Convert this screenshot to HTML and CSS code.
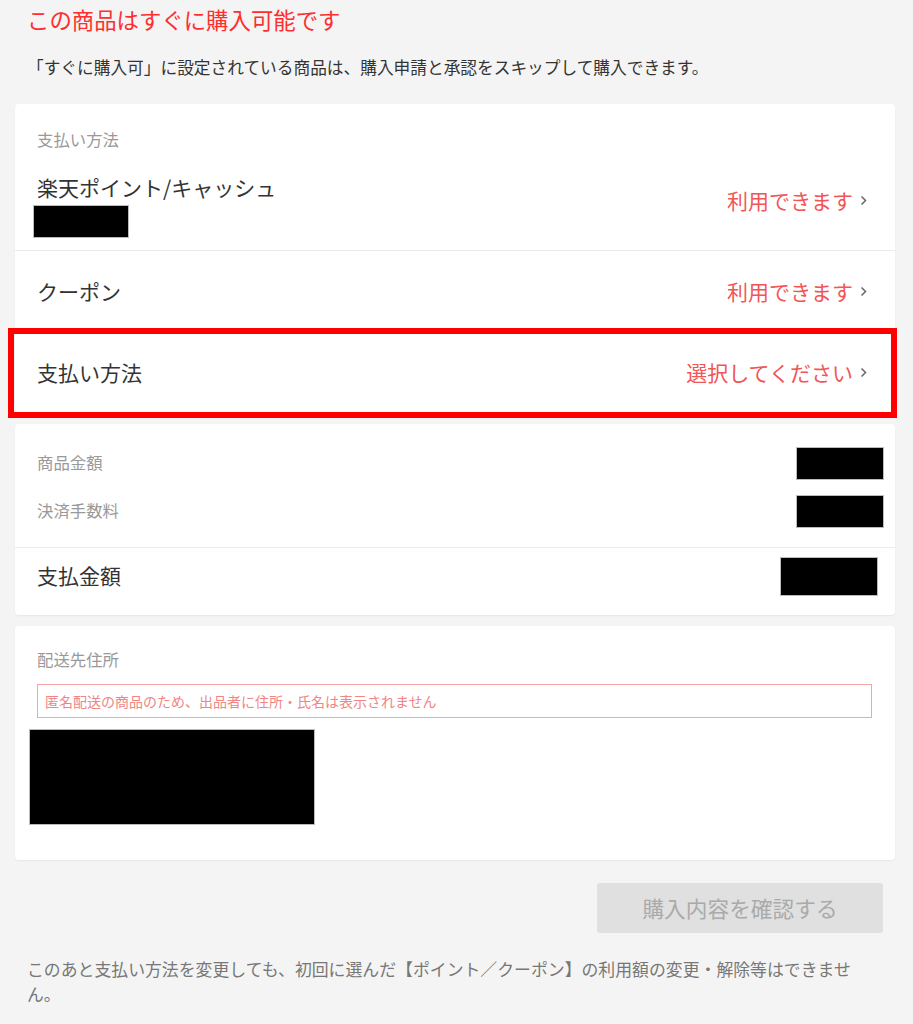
FILE: index.html
```html
<!DOCTYPE html>
<html lang="ja">
<head>
<meta charset="utf-8">
<title>購入手続き</title>
<link rel="stylesheet" href="styles.css">
</head>
<body>
<div class="page">
  <h1 class="title">この商品はすぐに購入可能です</h1>
  <p class="lead">「すぐに購入可」に設定されている商品は、購入申請と承認をスキップして購入できます。</p>

  <section class="card">
    <div class="card-label">支払い方法</div>
    <div class="row row-first">
      <div class="row-main">
        <div class="row-title">楽天ポイント/キャッシュ</div>
        <div class="redact redact-points"></div>
      </div>
      <div class="row-action">利用できます<svg class="chev" width="7" height="11" viewBox="0 0 7 11"><path d="M1.5 1.5 L5.5 5.5 L1.5 9.5" fill="none" stroke="#666" stroke-width="1.5"/></svg></div>
    </div>
    <div class="row row-simple">
      <div class="row-title">クーポン</div>
      <div class="row-action">利用できます<svg class="chev" width="7" height="11" viewBox="0 0 7 11"><path d="M1.5 1.5 L5.5 5.5 L1.5 9.5" fill="none" stroke="#666" stroke-width="1.5"/></svg></div>
    </div>
    <div class="row row-simple row-highlight">
      <div class="row-title">支払い方法</div>
      <div class="row-action">選択してください<svg class="chev" width="7" height="11" viewBox="0 0 7 11"><path d="M1.5 1.5 L5.5 5.5 L1.5 9.5" fill="none" stroke="#666" stroke-width="1.5"/></svg></div>
      <div class="annotation"></div>
    </div>
  </section>

  <section class="card card-amount">
    <div class="amount-list">
      <div class="amount-row">
        <span class="amount-label">商品金額</span>
        <span class="redact redact-amount"></span>
      </div>
      <div class="amount-row">
        <span class="amount-label">決済手数料</span>
        <span class="redact redact-amount"></span>
      </div>
    </div>
    <div class="total-row">
      <span class="total-label">支払金額</span>
      <span class="redact redact-total"></span>
    </div>
  </section>

  <section class="card card-address">
    <div class="card-label">配送先住所</div>
    <div class="notice">匿名配送の商品のため、出品者に住所・氏名は表示されません</div>
    <div class="redact redact-address"></div>
  </section>

  <div class="actions">
    <button class="confirm" type="button" disabled>購入内容を確認する</button>
  </div>

  <p class="footnote">このあと支払い方法を変更しても、初回に選んだ【ポイント／クーポン】の利用額の変更・解除等はできません。</p>
</div>
</body>
</html>
```

FILE: styles.css
```css
* { box-sizing: border-box; }

html, body {
  margin: 0;
  padding: 0;
  background: #f4f4f4;
}

body {
  font-family: "Noto Sans CJK JP", "Noto Sans", sans-serif;
  color: #333;
}

.page {
  margin: 0 18px 0 15px;
  padding-top: 4px;
}

.title {
  margin: 0;
  padding-left: 12px;
  font-size: 22.4px;
  line-height: 30px;
  font-weight: normal;
  color: #ff2e2e;
}

.lead {
  margin: 21px 0 0;
  padding-left: 12px;
  font-size: 16.7px;
  line-height: 24px;
  color: #333;
}

.card {
  background: #fff;
  border-radius: 4px;
  box-shadow: 0 1px 2px rgba(0, 0, 0, 0.06);
}

.page > .card:first-of-type { margin-top: 25px; }

.card-label {
  padding: 24px 22px 0;
  font-size: 16.4px;
  line-height: 22px;
  color: #999;
}

.row {
  display: flex;
  align-items: center;
  justify-content: space-between;
  padding: 0 28px 0 22px;
}

.row-first {
  border-bottom: 1px solid #ebebeb;
}

.row-main {
  padding: 23px 0 12px;
}

.row-simple {
  height: 80px;
}

.row-highlight {
  position: relative;
  height: 82px;
}

.annotation {
  position: absolute;
  top: -3px;
  left: -7px;
  right: -2px;
  bottom: -5px;
  border: 6px solid #ff0000;
  pointer-events: none;
}

.row-title {
  font-size: 21px;
  line-height: 28px;
  color: #333;
}

.row-action {
  display: flex;
  align-items: center;
  gap: 7px;
  font-size: 21px;
  line-height: 28px;
  color: #f25555;
}

.chev { display: block; margin-top: 1px; }

.redact {
  display: block;
  background: #000;
  border: 1px solid #bbb;
}

.redact-points {
  width: 96px;
  height: 33px;
  margin: 4px 0 0 -4px;
}

.card-amount {
  margin-top: 11px;
}

.amount-list {
  display: flex;
  flex-direction: column;
  gap: 15px;
  padding: 23px 11px 19px 22px;
  border-bottom: 1px solid #ebebeb;
}

.amount-row {
  display: flex;
  align-items: center;
  justify-content: space-between;
}

.amount-label {
  font-size: 16.4px;
  line-height: 22px;
  color: #999;
  margin-bottom: 3px;
}

.redact-amount {
  width: 88px;
  height: 33px;
}

.total-row {
  display: flex;
  align-items: center;
  justify-content: space-between;
  padding: 9px 17px 19px 22px;
}

.total-label {
  font-size: 21px;
  line-height: 28px;
  color: #333;
  margin-bottom: 4px;
}

.redact-total {
  width: 98px;
  height: 39px;
}

.card-address {
  margin-top: 11px;
  padding-bottom: 35px;
}

.card-address .card-label {
  padding-top: 22px;
}

.notice {
  margin: 14px 23px 0 22px;
  height: 34px;
  padding: 0 7px;
  border: 1px solid #f5a5a5;
  font-size: 14px;
  line-height: 32px;
  color: #f08585;
}

.redact-address {
  width: 286px;
  height: 96px;
  margin: 11px 0 0 14px;
}

.actions {
  display: flex;
  justify-content: flex-end;
  padding-right: 12px;
  margin-top: 23px;
}

.confirm {
  width: 286px;
  height: 50px;
  border: none;
  border-radius: 3px;
  background: #e0e0e0;
  color: #aaa;
  font-family: inherit;
  font-size: 21.7px;
  line-height: 30px;
  padding: 0;
}

.footnote {
  margin: 23px 0 0;
  padding: 0 12px;
  font-size: 16.86px;
  line-height: 25px;
  color: #777;
}
```
